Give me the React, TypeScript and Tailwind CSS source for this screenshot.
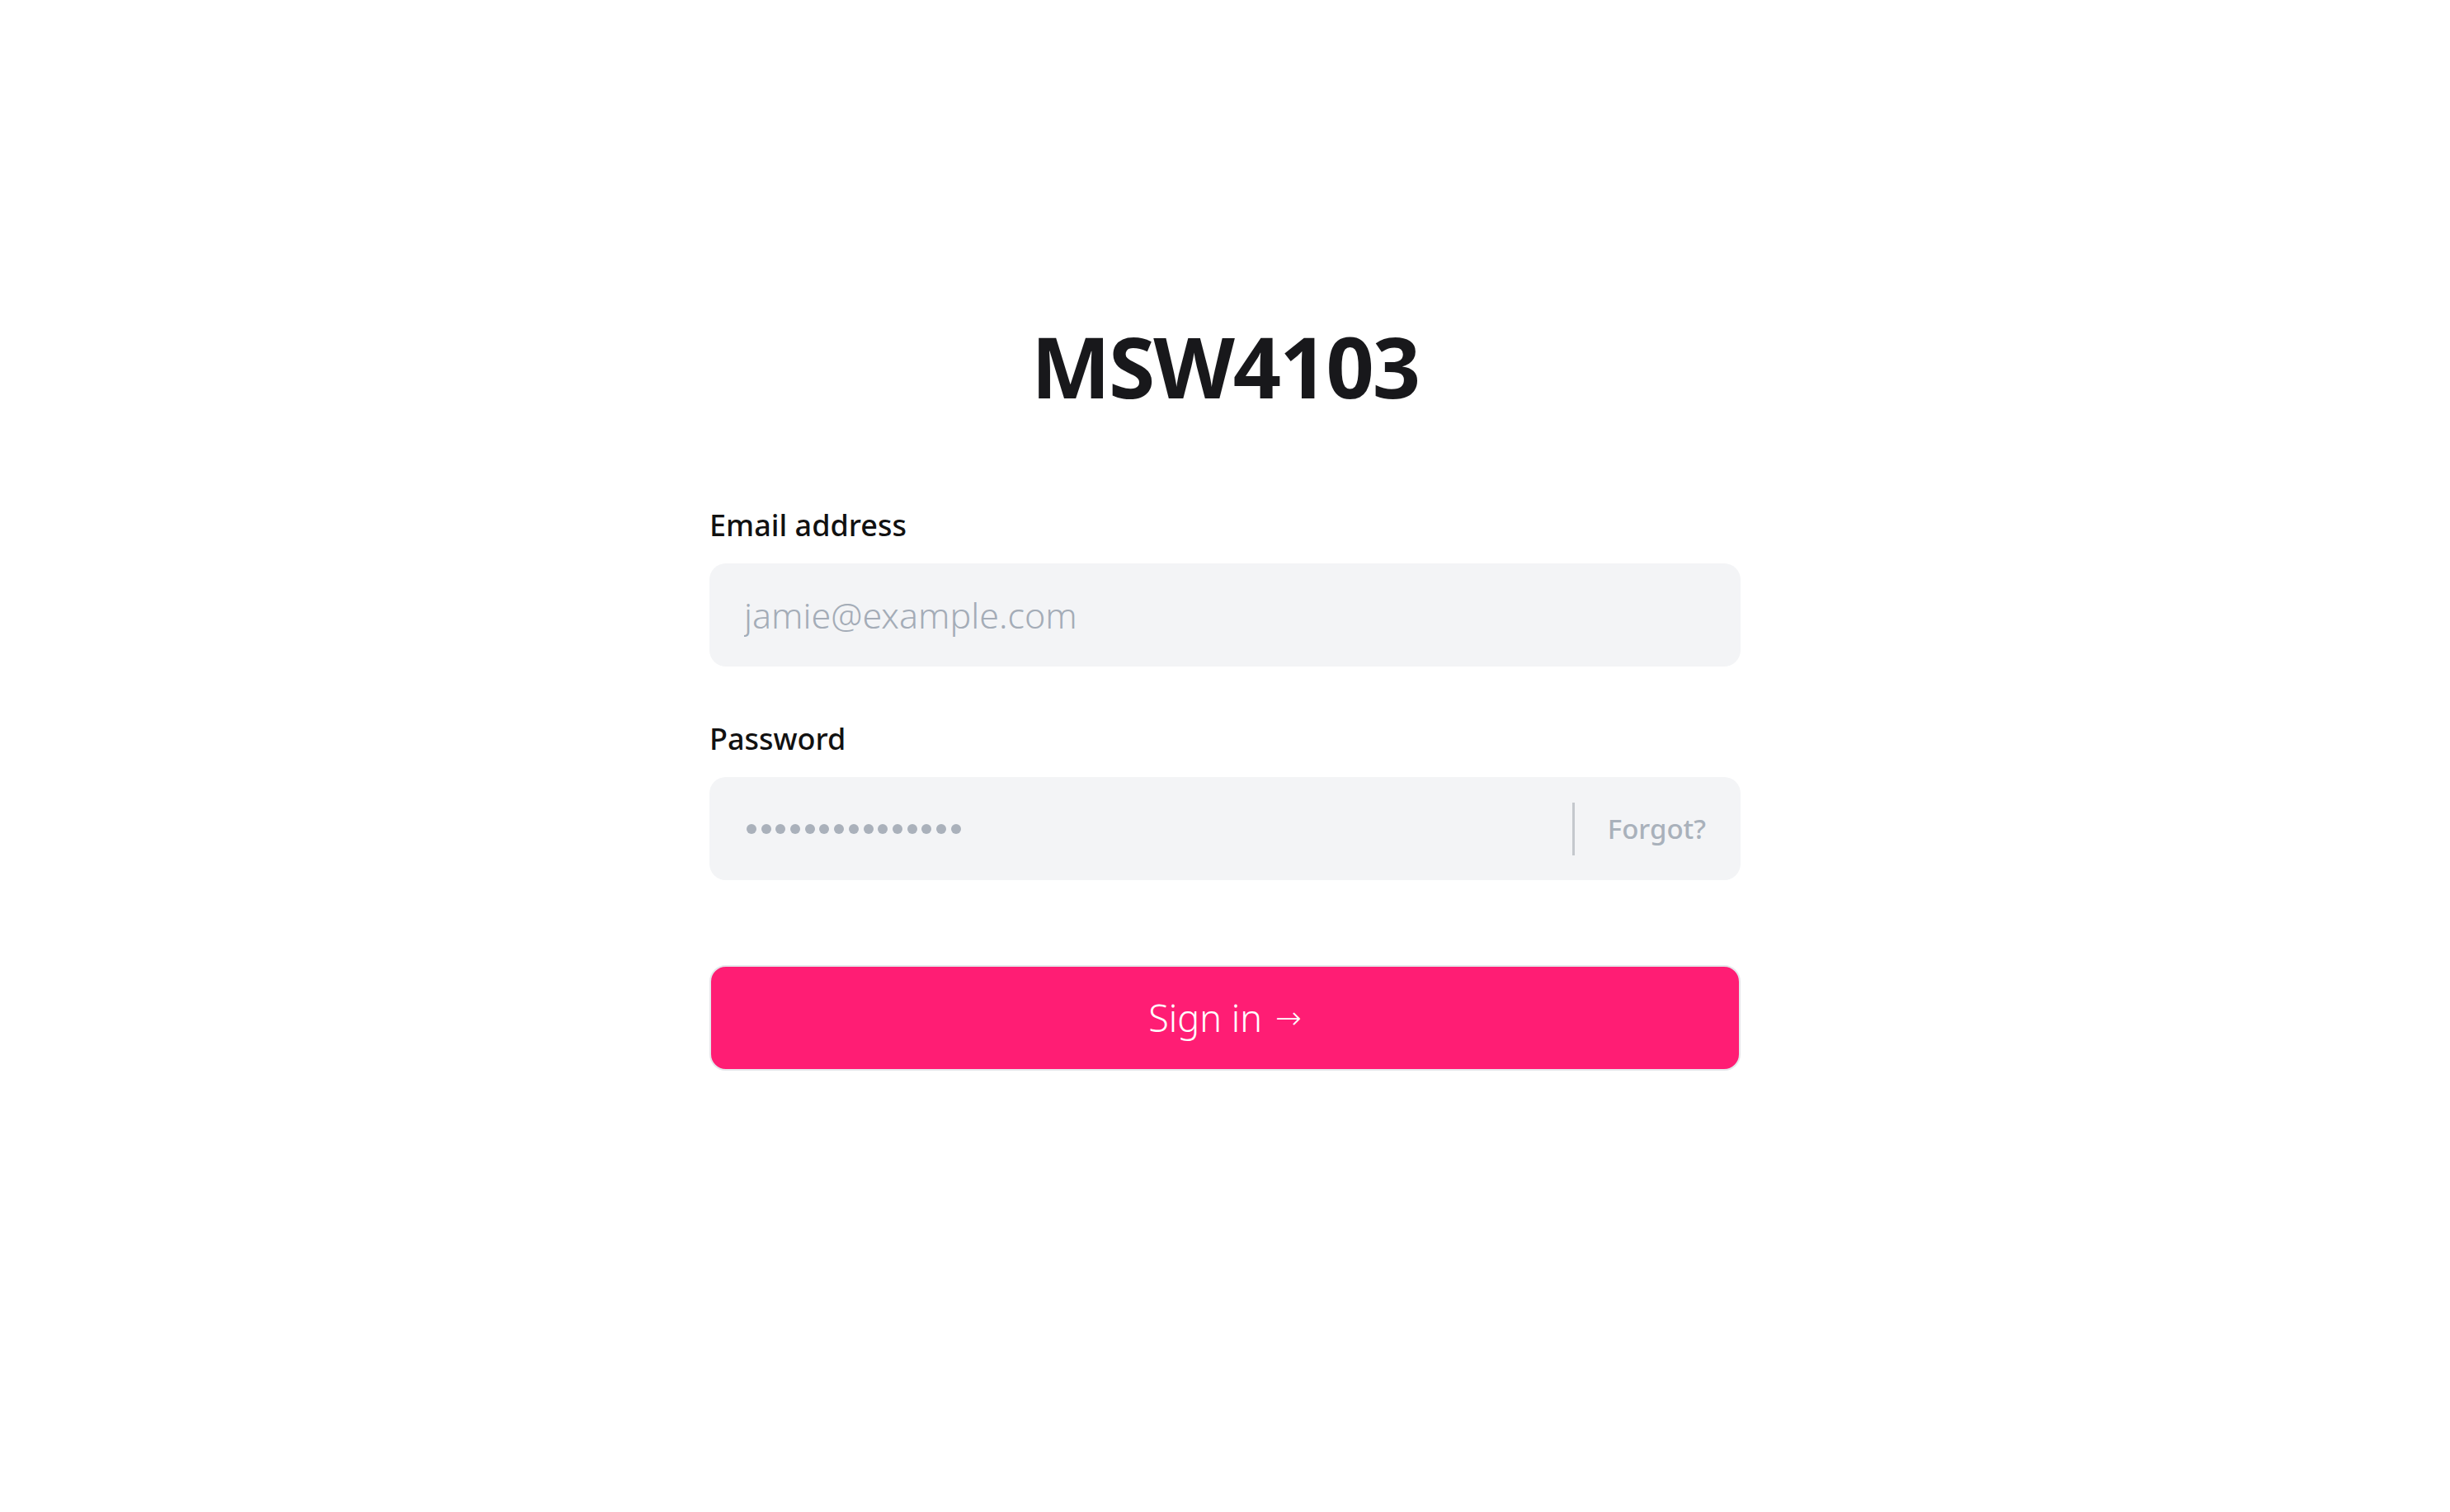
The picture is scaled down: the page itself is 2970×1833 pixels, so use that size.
import React from "react";

export default function App() {
  const dots = Array.from({ length: 15 });
  return (
    <div className="min-h-screen bg-white flex justify-center" style={{ fontFamily: '"Noto Sans", "Open Sans", sans-serif' }}>
      <div className="w-[1250px] pt-[393px]">
        <h1 className="text-center text-[102px] leading-none font-bold tracking-[-0.02em] text-[#18181b]">MSW4103</h1>
        <form className="mt-[118px] flex flex-col" onSubmit={(e) => e.preventDefault()}>
          <label className="block text-[36px] leading-[48px] font-medium text-[#111111]">Email address</label>
          <input
            type="email"
            placeholder="jamie@example.com"
            className="mt-[22px] h-[125px] w-full rounded-[20px] bg-[#f3f4f6] px-[42px] text-[43px] font-light text-[#111111] placeholder:text-[#a4acb7] outline-none"
          />
          <label className="mt-[64px] block text-[36px] leading-[48px] font-medium text-[#111111]">Password</label>
          <div className="mt-[22px] h-[125px] w-full rounded-[20px] bg-[#f3f4f6] flex items-center pl-[45px] pr-[42px]">
            <div className="flex-1 flex items-center gap-[5.7px]" aria-label="password">
              {dots.map((_, i) => (
                <span key={i} className="block w-[12px] h-[12px] rounded-full bg-[#aab1bb]" />
              ))}
            </div>
            <div className="w-[3px] h-[64px] bg-[#c4c8cd]" />
            <a href="#" className="ml-[40px] text-[33px] font-medium text-[#a9b1bb]">Forgot?</a>
          </div>
          <button
            type="submit"
            className="mt-[103px] h-[128px] w-full rounded-[20px] bg-[#ff1d74] border-2 border-[#e5e7eb] text-white text-[45px] font-light flex items-center justify-center"
          >
            <span>Sign in</span>
            <span className="ml-[16px] text-[38px]" style={{ fontFamily: '"DejaVu Sans", sans-serif' }}>→</span>
          </button>
        </form>
      </div>
    </div>
  );
}
